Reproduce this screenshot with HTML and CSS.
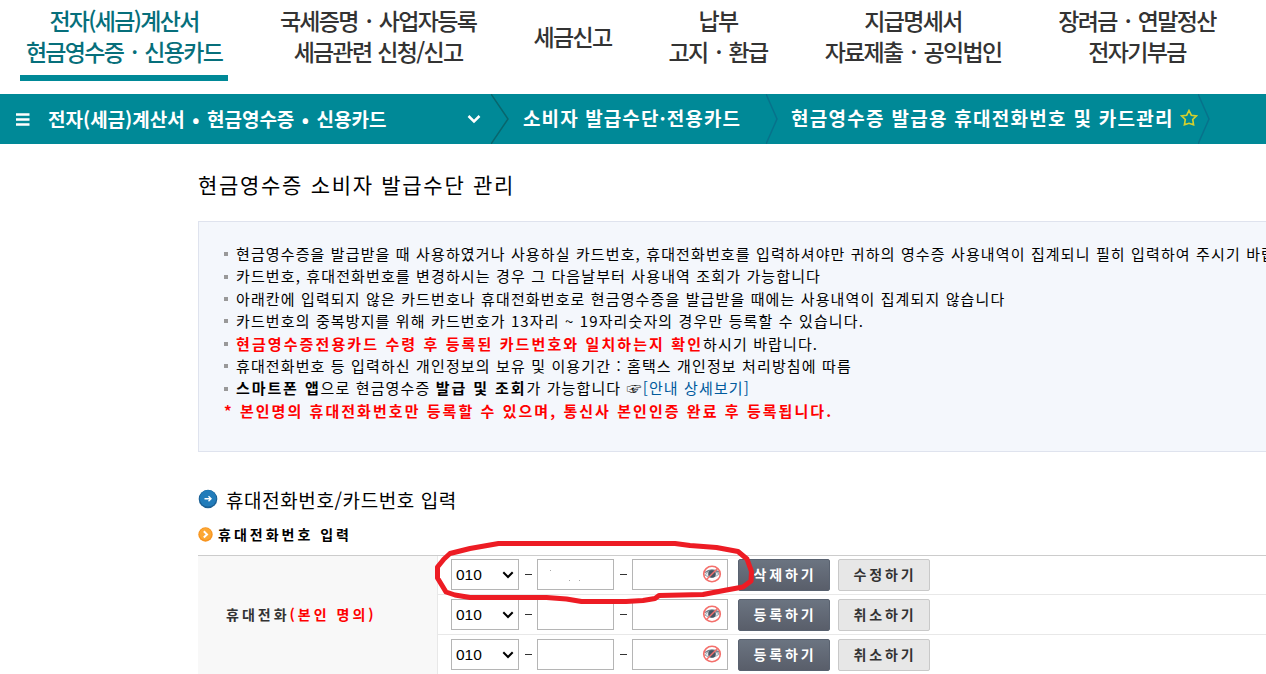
FILE: index.html
```
<!DOCTYPE html>
<html lang="ko">
<head>
    <meta charset="UTF-8">
    <meta name="viewport" content="width=device-width, initial-scale=1.0">
    <title>현금영수증 소비자 발급수단 관리</title>
    <link rel="stylesheet" href="styles.css">
</head>
<body>

    <!-- Shared icons -->
    <svg class="defs" width="0" height="0">
        <symbol id="eye" viewBox="0 0 20 18">
            <path d="M2.5 10Q9 3 17.5 9Q10 15 2.5 10Z" fill="#e3e8ec" stroke="#a3adb6"/>
            <path d="M3 7.5Q9 3 17 7" fill="none" stroke="#75818c" stroke-width="1.5"/>
            <circle cx="10" cy="9" r="3.8" fill="#465563"/>
            <ellipse cx="10" cy="9" rx="8.3" ry="7.7" fill="none" stroke="#f4706c" stroke-width="1.6"/>
            <path d="M4.5 14.5L15.5 3.5" stroke="#f4706c" stroke-width="1.5"/>
        </symbol>
        <symbol id="arrow" viewBox="0 0 12 8">
            <path d="M1.3 1.3L6 6L10.7 1.3" fill="none" stroke="currentColor" stroke-width="2"/>
        </symbol>
    </svg>

    <!-- Main menu -->
    <nav class="menu">
        <a class="on" href="#"><span>전자(세금)계산서</span><span>현금영수증 · 신용카드</span></a>
        <a href="#"><span>국세증명 · 사업자등록</span><span class="tight">세금관련 신청/신고</span></a>
        <a href="#"><span>세금신고</span></a>
        <a href="#"><span>납부</span><span>고지 · 환급</span></a>
        <a href="#"><span>지급명세서</span><span>자료제출 · 공익법인</span></a>
        <a href="#"><span>장려금 · 연말정산</span><span>전자기부금</span></a>
    </nav>

    <!-- Location bar -->
    <div class="location">
        <svg class="burger" width="14" height="14" viewBox="0 0 14 14"><path d="M0 2.5H13.5M0 7.5H13.5M0 12.5H13.5" stroke="#fff" stroke-width="2.4"/></svg>
        <span class="loc1">전자(세금)계산서 • 현금영수증 • 신용카드</span>
        <svg class="down" width="14" height="10" viewBox="0 0 14 10"><path d="M1.5 2L7 7.5L12.5 2" fill="none" stroke="#fff" stroke-width="2.5"/></svg>
        <svg class="sep" width="20" height="50" viewBox="0 0 20 50"><path d="M0 0L17 25L0 50" fill="none" stroke="#08666d" stroke-width="1.5"/></svg>
        <span class="loc2">소비자 발급수단·전용카드</span>
        <svg class="sep" width="14" height="50" viewBox="0 0 14 50"><path d="M0 0L11 25L0 50" fill="none" stroke="#07728b" stroke-width="1.5"/></svg>
        <span class="loc3">현금영수증 발급용 휴대전화번호 및 카드관리</span>
        <svg class="star" width="18" height="18" viewBox="0 0 18 18"><path d="M9 1.5L11.3 6.2L16.4 6.9L12.7 10.5L13.6 15.8L9 14.3L4.4 15.8L5.3 10.5L1.6 6.9L6.7 6.2Z" fill="none" stroke="#d5d02c" stroke-width="1.6"/></svg>
        <svg class="sep" width="14" height="50" viewBox="0 0 14 50"><path d="M0 0L11 25L0 50" fill="none" stroke="#07728b" stroke-width="1.5"/></svg>
    </div>

    <!-- Content -->
    <main>
        <h1>현금영수증 소비자 발급수단 관리</h1>

        <ul class="notice">
            <li>현금영수증을 발급받을 때 사용하였거나 사용하실 카드번호, 휴대전화번호를 입력하셔야만 귀하의 영수증 사용내역이 집계되니 필히 입력하여 주시기 바랍</li>
            <li>카드번호, 휴대전화번호를 변경하시는 경우 그 다음날부터 사용내역 조회가 가능합니다</li>
            <li>아래칸에 입력되지 않은 카드번호나 휴대전화번호로 현금영수증을 발급받을 때에는 사용내역이 집계되지 않습니다</li>
            <li>카드번호의 중복방지를 위해 카드번호가 13자리 ~ 19자리숫자의 경우만 등록할 수 있습니다.</li>
            <li><b class="red">현금영수증전용카드 수령 후 등록된 카드번호와 일치하는지 확인</b>하시기 바랍니다.</li>
            <li>휴대전화번호 등 입력하신 개인정보의 보유 및 이용기간 : 홈택스 개인정보 처리방침에 따름</li>
            <li><b class="black">스마트폰 앱</b>으로 현금영수증 <b class="black">발급 및 조회</b>가 가능합니다 <span class="hand">☞</span><a href="#">[안내 상세보기]</a></li>
            <li class="warn">* 본인명의 휴대전화번호만 등록할 수 있으며, 통신사 본인인증 완료 후 등록됩니다.</li>
        </ul>

        <h2>
            <svg width="20" height="20" viewBox="0 0 20 20"><circle cx="10" cy="10" r="9.3" fill="#1b6095"/><circle cx="10" cy="9.3" r="8.3" fill="#227cba"/><path d="M6.5 9.8H13M10.5 7.3L13 9.8L10.5 12.3" fill="none" stroke="#fff" stroke-width="1.4"/></svg>
            휴대전화번호/카드번호 입력
        </h2>
        <h3>
            <svg width="15" height="15" viewBox="0 0 15 15"><circle cx="7.5" cy="7.5" r="7.2" fill="#f7941f"/><circle cx="7.5" cy="7" r="6" fill="#fca733"/><path d="M5.8 4.3L9 7.4L5.8 10.5" fill="none" stroke="#fff" stroke-width="2"/></svg>
            휴대전화번호 입력
        </h3>

        <div class="phones">
            <div class="label">휴대전화<span class="red">(본인 명의)</span></div>
            <div class="rows">
                <div class="row">
                    <div class="pick"><select><option>010</option></select><svg width="12" height="8"><use href="#arrow"/></svg></div>
                    <i></i>
                    <div class="box dots"><span></span><span></span><span></span></div>
                    <i></i>
                    <div class="box last"><svg width="20" height="18"><use href="#eye"/></svg></div>
                    <button class="dark">삭제하기</button>
                    <button>수정하기</button>
                </div>
                <div class="row">
                    <div class="pick"><select><option>010</option></select><svg width="12" height="8"><use href="#arrow"/></svg></div>
                    <i></i>
                    <div class="box"></div>
                    <i></i>
                    <div class="box last"><svg width="20" height="18"><use href="#eye"/></svg></div>
                    <button class="dark">등록하기</button>
                    <button>취소하기</button>
                </div>
                <div class="row">
                    <div class="pick"><select><option>010</option></select><svg width="12" height="8"><use href="#arrow"/></svg></div>
                    <i></i>
                    <div class="box"></div>
                    <i></i>
                    <div class="box last"><svg width="20" height="18"><use href="#eye"/></svg></div>
                    <button class="dark">등록하기</button>
                    <button>취소하기</button>
                </div>
            </div>
        </div>
    </main>

    <!-- Red marker line around the first number -->
    <svg class="marker" width="330" height="70" viewBox="430 537 330 70">
        <path d="M437.5 567L444 559L450 553.5L470 548.5L498.5 543.5H675L690 545.5L716.5 547.5L738 551.5L747 559L751.5 571.5L751 581L743 587L726.5 590L703 594.5L659 595.5L655 598.5L643 600.5L626 601.5H581.5L566.5 599L546.5 597.5H470L455 595L446 592L437.5 578Z"/>
    </svg>

</body>
</html>
```
FILE: styles.css
```
* {
    box-sizing: border-box;
}

body {
    margin: 0;
    height: 674px;
    overflow: hidden;
    background: #fff;
    color: #000;
    font-family: "Noto Sans CJK KR", sans-serif;
    white-space: nowrap;
}

a {
    text-decoration: none;
}

svg {
    display: block;
    flex: none;
}

.defs {
    position: absolute;
}

.red {
    color: #ff0000;
}

/* main menu */
.menu {
    display: grid;
    grid-template-columns: 208px 300px 89px 202px 188px 260px;
    height: 94px;
    padding: 0 0 13px 20px;
}

.menu a {
    display: flex;
    flex-direction: column;
    align-items: center;
    justify-content: center;
    padding-bottom: 9px;
    color: #333;
    font-size: 23px;
    font-weight: 500;
    line-height: 31px;
    letter-spacing: -1.7px;
    word-spacing: 3.2px;
}

.menu .tight {
    word-spacing: 1px;
}

.menu a.on {
    color: #066f7b;
    border-bottom: 6px solid #008997;
    padding-bottom: 3px;
}

/* location bar */
.location {
    display: flex;
    align-items: center;
    height: 50px;
    background: #008997;
    color: #fff;
    font-size: 19px;
    font-weight: bold;
}

.location span {
    padding-bottom: 3px;
}

.burger {
    margin: 0 18px 0 16px;
}

.location .loc1 {
    width: 419px;
    padding-bottom: 1px;
    word-spacing: 2.2px;
}

.down {
    margin-right: 10px;
}

.location .loc2 {
    width: 255px;
    padding-left: 12px;
    letter-spacing: 1.1px;
}

.location .loc3 {
    width: 400px;
    padding-left: 11px;
    letter-spacing: 1.28px;
}

.star {
    margin-top: -2px;
}

/* content */
main {
    padding-left: 198px;
}

h1 {
    margin: 0;
    height: 77px;
    padding-top: 24px;
    font-size: 21px;
    font-weight: normal;
    line-height: 32px;
    letter-spacing: 1.7px;
}

.notice {
    margin: 0;
    height: 231px;
    padding: 21px 0 0 25px;
    border: 1px solid #dfe3ee;
    border-right: 0;
    background: #f4f7fc;
    list-style: none;
    font-size: 15px;
    line-height: 22.4px;
    letter-spacing: 1.12px;
}

.notice li {
    display: flex;
    align-items: center;
    white-space: pre;
}

.notice li::before {
    content: "";
    flex: none;
    width: 4px;
    height: 4px;
    margin-right: 8px;
    background: #999;
}

.notice li.warn {
    color: #ff0000;
    font-weight: bold;
    letter-spacing: 2.05px;
}

.notice li.warn::before {
    display: none;
}

.notice b {
    letter-spacing: 2.1px;
}

.notice .black {
    letter-spacing: 1.9px;
}

.notice a {
    color: #005a9c;
}

h2,
h3 {
    display: flex;
    align-items: center;
    margin: 0;
}

h2 {
    gap: 8px;
    height: 38px;
    margin-top: 28px;
    font-size: 19px;
    font-weight: normal;
    letter-spacing: 0.6px;
}

h3 {
    gap: 5px;
    height: 37px;
    padding-bottom: 5px;
    font-size: 14px;
    letter-spacing: 3px;
}

/* phone number table */
.phones {
    display: flex;
    border-top: 1px solid #ccc;
}

.label {
    width: 240px;
    height: 120px;
    padding-left: 28px;
    border-right: 1px solid #e8e8e8;
    background: #f8f8f8;
    color: #333;
    font-size: 14px;
    font-weight: bold;
    line-height: 116px;
    letter-spacing: 3px;
}

.rows {
    flex: 1;
}

.row {
    display: flex;
    height: 40px;
    padding: 4px 0 0 13px;
    border-bottom: 1px solid #e8e8e8;
}

.row:first-child {
    height: 39px;
    padding-top: 3px;
}

.pick {
    display: grid;
    align-items: center;
    width: 68px;
    height: 31px;
}

.pick select,
.pick svg {
    grid-area: 1 / 1;
}

.pick svg {
    justify-self: end;
    margin-right: 5px;
}

.pick select {
    width: 68px;
    height: 31px;
    padding: 0 4px;
    border: 1px solid #b5b5b5;
    border-radius: 0;
    background: #fff;
    color: #000;
    font: 15.5px "Liberation Sans", Arial, sans-serif;
    appearance: none;
}

.row i {
    width: 7px;
    height: 1px;
    margin: 15px 5px 0 6px;
    background: #333;
}

.box {
    display: flex;
    width: 77px;
    height: 31px;
    border: 1px solid #b5b5b5;
    background: #fff;
}

.box.last {
    width: 96px;
    align-items: center;
    justify-content: flex-end;
    padding: 0 5px 1px 0;
}

/* faint dots left in the first number */
.dots {
    padding: 10px 0 0 12px;
}

.dots span {
    width: 1px;
    height: 1px;
    background: #aaa;
}

.dots span + span {
    margin: 10px 0 0 18px;
}

.dots span + span + span {
    margin-left: 9px;
}

button {
    width: 92px;
    height: 32px;
    margin-left: 8px;
    padding: 0 0 3px 2px;
    border: 1px solid #c9c9c9;
    border-radius: 2px;
    background: #e7e7e7;
    color: #333;
    font-family: inherit;
    font-size: 14px;
    font-weight: bold;
    letter-spacing: 2.9px;
}

button.dark {
    margin-left: 10px;
    border-color: #596270;
    background: linear-gradient(#6b7481, #595e6a);
    color: #fff;
}

.marker {
    position: absolute;
    left: 430px;
    top: 537px;
}

.marker path {
    fill: none;
    stroke: #ed1c24;
    stroke-width: 5;
    stroke-linejoin: round;
}
```
